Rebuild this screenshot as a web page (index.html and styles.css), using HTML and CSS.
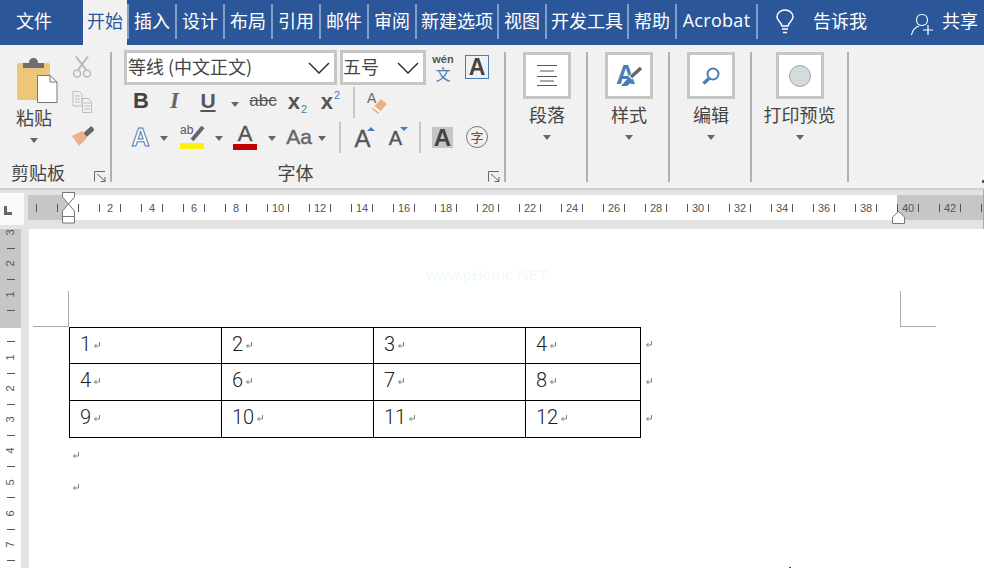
FILE: index.html
```html
<!DOCTYPE html>
<html>
<head>
    <title>Word</title>
    <link rel="stylesheet" href="styles.css">
</head>
<body>
    <svg class="defs" width="0" height="0">
        <symbol id="ret" viewBox="0 0 8 7"><path d="M6.5 0V4H1.5M3.5 2L1.5 4L3.5 6" fill="none" stroke="#808080"/></symbol>
        <symbol id="launch" viewBox="0 0 12 11"><path d="M.5 10.5V.5H11M3 3L11 10M11 6V10.5H6.5" fill="none" stroke="#666"/></symbol>
        <symbol id="chev" viewBox="0 0 22 12"><path d="M1 1L11 11L21 1" fill="none" stroke="#333" stroke-width="1.5"/></symbol>
    </svg>

    <div class="tabs">
        <div class="tab tab-file">文件</div>
        <div class="tab tab-home">开始</div>
        <div class="tab tab-first">插入</div>
        <div class="tab">设计</div>
        <div class="tab">布局</div>
        <div class="tab">引用</div>
        <div class="tab">邮件</div>
        <div class="tab">审阅</div>
        <div class="tab tab-wide">新建选项</div>
        <div class="tab">视图</div>
        <div class="tab tab-wide">开发工具</div>
        <div class="tab">帮助</div>
        <div class="tab tab-acro">Acrobat</div>
        <svg class="bulb" width="18" height="25" viewBox="0 0 18 25"><path d="M6 17C5 13 1 11.500 1 8C1 4 4.500 1 9 1S17 4 17 8C17 11.500 13 13 12 17ZM6 20H12M7 23.500H11" fill="none" stroke="#fff" stroke-width="1.500"/></svg>
        <div class="tell">告诉我</div>
        <svg class="person" width="22" height="23" viewBox="0 0 22 23"><path d="M11 1.500C7.500 1.500 5.500 4 5.500 7C5.500 10 7.500 12.500 11 12.500S16.500 10 16.500 7C16.500 4 14.500 1.500 11 1.500ZM.5 22C1.500 17 4.500 14 8 13M17 12V22M12 17H22" fill="none" stroke="#fff" stroke-width="1.200"/></svg>
        <div class="share">共享</div>
    </div>

    <div class="ribbon">
        <div class="group group-clip">
            <div class="clip-top">
                <div class="paste">
                    <svg class="paste-icon" width="41" height="45" viewBox="0 0 41 45">
                        <rect x="0" y="5" width="33" height="37" rx="2" fill="#eec67a"/>
                        <path d="M6 10V5H12C12 1.500 14 0 16.500 0S21 1.500 21 5H27V10Z" fill="#6e6e6e"/>
                        <path d="M20.500 17.500H33L40 24V44.500H20.500Z" fill="#fff" stroke="#777"/>
                        <path d="M33 17.500V24H40" fill="none" stroke="#777"/>
                    </svg>
                    <div class="big-label">粘贴</div>
                    <span class="caret"></span>
                </div>
                <div class="clip-tools">
                    <svg width="20" height="22" viewBox="0 0 20 22"><path d="M4 .5L14.500 14.500M16 .5L5.500 14.500" fill="none" stroke="#b9b9b9" stroke-width="2"/><circle cx="5" cy="17.500" r="3.500" fill="none" stroke="#b9b9b9" stroke-width="1.500"/><circle cx="15" cy="17.500" r="3.500" fill="none" stroke="#b9b9b9" stroke-width="1.500"/></svg>
                    <svg width="20" height="23" viewBox="0 0 20 23"><path d="M1 1.500H7L10 4.500V16H1ZM3 6H8M3 9H8M3 12H8" fill="none" stroke="#bdbdbd"/><path d="M10.500 8.500H16L19.500 11.500V22.500H10.500ZM12 13H18M12 16H18M12 19H18" fill="#f1f1f1" stroke="#bdbdbd"/></svg>
                    <svg width="23" height="21" viewBox="0 0 23 21"><path d="M22 3L14 10" stroke="#666" stroke-width="5"/><path d="M1 11L11 6L16 13L8 21Z" fill="#eeb088"/></svg>
                </div>
            </div>
            <div class="foot foot-clip">
                <span>剪贴板</span>
                <svg class="launch" width="12" height="11"><use href="#launch"/></svg>
            </div>
        </div>

        <div class="group group-font">
            <div class="font-rows">
                <div class="combo-row">
                    <div class="combo combo-name"><span>等线 (中文正文)</span><svg width="22" height="12"><use href="#chev"/></svg></div>
                    <div class="combo combo-size"><span>五号</span><svg width="22" height="12"><use href="#chev"/></svg></div>
                    <div class="wen"><span class="wen-top">wén</span><span class="wen-cn">文</span></div>
                    <div class="boxed-a">A</div>
                </div>
                <div class="tool-row tool-row-a">
                    <span class="t w34 t-b">B</span>
                    <span class="t w33 t-i">I</span>
                    <span class="t w34 t-u">U</span>
                    <span class="t w20"><span class="caret"></span></span>
                    <span class="t w36 t-abc">abc</span>
                    <span class="t w33 t-x">x<sub>2</sub></span>
                    <span class="t w33 t-x">x<sup>2</sup></span>
                    <span class="vsep vsep-a"></span>
                    <span class="t w36">
                        <svg class="open" width="22" height="24" viewBox="0 0 22 24">
                            <text x="0" y="12" font-family="Liberation Sans" font-size="14" fill="#666">A</text>
                            <path d="M14 8L20 13L11 23L5 18Z" fill="#eeb088"/>
                            <path d="M5 18L11 23" stroke="#fff" stroke-width="2" transform="translate(2 -2)"/>
                        </svg>
                    </span>
                </div>
                <div class="tool-row tool-row-b">
                    <span class="t w33 t-outline">A</span>
                    <span class="t w14"><span class="caret"></span></span>
                    <span class="t w42">
                        <svg class="open" width="24" height="24" viewBox="0 0 24 24">
                            <text x="0" y="9" font-family="Liberation Sans" font-size="12" fill="#555">ab</text>
                            <path d="M23 2L12 15" stroke="#666" stroke-width="4"/>
                            <rect x="0" y="18" width="24" height="6" fill="#f9f20f"/>
                        </svg>
                    </span>
                    <span class="t w12"><span class="caret"></span></span>
                    <span class="t w40 t-color">A</span>
                    <span class="t w14"><span class="caret"></span></span>
                    <span class="t w36 t-aa">Aa</span>
                    <span class="t w14"><span class="caret"></span></span>
                    <span class="vsep vsep-b"></span>
                    <span class="t w35 t-grow">A<i class="tri tri-up"></i></span>
                    <span class="t w33 t-shrink">A<i class="tri tri-down"></i></span>
                    <span class="vsep vsep-c"></span>
                    <span class="t w35"><span class="t-shade">A</span></span>
                    <span class="t w34"><span class="t-circle">字</span></span>
                </div>
            </div>
            <div class="foot foot-font">
                <span></span>
                <span>字体</span>
                <svg class="launch" width="12" height="11"><use href="#launch"/></svg>
            </div>
        </div>

        <div class="group group-big">
            <div class="big-box">
                <svg width="20" height="21" viewBox="0 0 20 21"><path d="M0 .5H20M3 6H17M0 11.500H20M3 16H17M0 20.500H20" stroke="#555"/></svg>
            </div>
            <div class="big-label">段落</div>
            <span class="caret"></span>
        </div>
        <div class="group group-big">
            <div class="big-box">
                <svg class="open" width="25" height="23" viewBox="0 0 25 23">
                    <text x="-1" y="20" font-family="Liberation Sans" font-weight="bold" font-size="27" fill="#4a7db5">A</text>
                    <path d="M24 4L13 14" stroke="#fff" stroke-width="5"/>
                    <path d="M24 4L14 13" stroke="#666" stroke-width="3.500"/>
                    <path d="M12 13L16 17L10 22H4Z" fill="#4a7db5"/>
                </svg>
            </div>
            <div class="big-label">样式</div>
            <span class="caret"></span>
        </div>
        <div class="group group-big">
            <div class="big-box">
                <svg width="18" height="18" viewBox="0 0 18 18"><circle cx="11" cy="7" r="5.500" fill="none" stroke="#4a7db5" stroke-width="2"/><path d="M7 11.500L1.500 16.500" stroke="#4a7db5" stroke-width="3.500"/></svg>
            </div>
            <div class="big-label">编辑</div>
            <span class="caret"></span>
        </div>
        <div class="group group-big group-print">
            <div class="big-box">
                <svg width="22" height="22" viewBox="0 0 22 22"><circle cx="11" cy="11" r="10.500" fill="#d3dcdc" stroke="#a0a0a8"/></svg>
            </div>
            <div class="big-label">打印预览</div>
            <span class="caret"></span>
        </div>
        <span class="collapse"></span>
    </div>

    <div class="ruler-row">
        <div class="corner"><span class="corner-l"></span></div>
        <div class="ruler">
            <div class="ruler-in">
                <span class="rn"></span><span class="rn"></span><span class="rn">2</span><span class="rn">4</span><span class="rn">6</span><span class="rn">8</span><span class="rn">10</span><span class="rn">12</span><span class="rn">14</span><span class="rn">16</span><span class="rn">18</span><span class="rn">20</span><span class="rn">22</span><span class="rn">24</span><span class="rn">26</span><span class="rn">28</span><span class="rn">30</span><span class="rn">32</span><span class="rn">34</span><span class="rn">36</span><span class="rn">38</span><span class="rn">40</span><span class="rn">42</span><span class="rn"></span>
            </div>
        </div>
        <svg class="marker-left" width="13" height="37" viewBox="0 0 13 37">
            <path d="M.5 .5H12.500V5L6.500 12L.5 5Z" fill="#fff" stroke="#777"/>
            <path d="M6.500 12L12.500 19V31H.5V19Z" fill="#fff" stroke="#777"/>
            <path d="M.5 24.500H12.500" stroke="#777"/>
        </svg>
        <svg class="marker-right" width="13" height="13" viewBox="0 0 13 13"><path d="M6.500 .5L12.500 6V12.500H.5V6Z" fill="#fff" stroke="#777"/></svg>
    </div>

    <div class="main">
        <div class="vruler">
            <div class="vruler-in">
                <span class="vn">3</span><span class="vt"></span><span class="vn">2</span><span class="vt"></span><span class="vn">1</span><span class="vt"></span><span class="vn"></span><span class="vt"></span><span class="vn">1</span><span class="vt"></span><span class="vn">2</span><span class="vt"></span><span class="vn">3</span><span class="vt"></span><span class="vn">4</span><span class="vt"></span><span class="vn">5</span><span class="vt"></span><span class="vn">6</span><span class="vt"></span><span class="vn">7</span><span class="vt"></span>
            </div>
        </div>
        <div class="page">
            <div class="watermark">www.pHome.NET</div>
            <div class="marks">
                <div class="mark mark-l"></div>
                <div class="mark mark-r"></div>
            </div>
            <div class="table-wrap">
                <table class="doc-table">
                    <tr class="r1">
                        <td class="c-a"><span class="cell">1<svg class="ret"><use href="#ret"/></svg></span></td>
                        <td class="c-a"><span class="cell">2<svg class="ret"><use href="#ret"/></svg></span></td>
                        <td class="c-a"><span class="cell">3<svg class="ret"><use href="#ret"/></svg></span></td>
                        <td class="c-b"><span class="cell">4<svg class="ret"><use href="#ret"/></svg></span></td>
                    </tr>
                    <tr class="r2">
                        <td><span class="cell">4<svg class="ret"><use href="#ret"/></svg></span></td>
                        <td><span class="cell">6<svg class="ret"><use href="#ret"/></svg></span></td>
                        <td><span class="cell">7<svg class="ret"><use href="#ret"/></svg></span></td>
                        <td><span class="cell">8<svg class="ret"><use href="#ret"/></svg></span></td>
                    </tr>
                    <tr class="r2">
                        <td><span class="cell">9<svg class="ret"><use href="#ret"/></svg></span></td>
                        <td><span class="cell">10<svg class="ret"><use href="#ret"/></svg></span></td>
                        <td><span class="cell">11<svg class="ret"><use href="#ret"/></svg></span></td>
                        <td><span class="cell">12<svg class="ret"><use href="#ret"/></svg></span></td>
                    </tr>
                </table>
                <div class="row-marks">
                    <span class="rm rm-1"><svg class="ret"><use href="#ret"/></svg></span>
                    <span class="rm"><svg class="ret"><use href="#ret"/></svg></span>
                    <span class="rm"><svg class="ret"><use href="#ret"/></svg></span>
                </div>
            </div>
            <div class="para"><svg class="ret"><use href="#ret"/></svg></div>
            <div class="para"><svg class="ret"><use href="#ret"/></svg></div>
            <span class="speck"></span>
        </div>
    </div>
</body>
</html>
```
FILE: styles.css
```css
body {
    margin: 0;
    width: 984px;
    height: 568px;
    overflow: hidden;
    background: #fff;
    font-family: "Noto Sans CJK SC", "Liberation Sans", sans-serif;
    color: #444;
}

.defs {
    display: block;
    height: 0;
}

.open {
    overflow: visible;
}

/* title tabs */
.tabs {
    display: flex;
    height: 45px;
    background: #2b579a;
    color: #fff;
    font-size: 18px;
}

.tab {
    width: 48px;
    height: 35px;
    margin-top: 4px;
    line-height: 33px;
    text-align: center;
    box-sizing: border-box;
    border-right: 2px solid #7ea0c9;
}

.tab-file {
    width: 83px;
    padding-right: 15px;
    border: none;
}

.tab-home {
    width: 44px;
    height: 45px;
    margin-top: 0;
    line-height: 41px;
    border: none;
    background: #f1f1f1;
    color: #2b579a;
}

.tab-first {
    width: 50px;
    border-left: 2px solid #7ea0c9;
}

.tab-wide {
    width: 82px;
}

.tab-acro {
    width: 81px;
    font-family: "Open Sans", sans-serif;
    letter-spacing: 0.3px;
}

.bulb {
    margin: 9px 0 0 18px;
}

.tell {
    margin: 4px 0 0 19px;
    line-height: 33px;
}

.person {
    margin: 13px 0 0 44px;
}

.share {
    margin: 4px 0 0 9px;
    line-height: 33px;
}

/* ribbon */
.ribbon {
    position: relative;
    display: flex;
    height: 143px;
    background: #f1f1f1;
    border-bottom: 2px solid #cfcfcf;
    font-size: 18px;
}

.collapse {
    position: absolute;
    right: 0;
    top: 135px;
    width: 2px;
    height: 3px;
    background: #555;
}

.group {
    display: flex;
    flex-direction: column;
    height: 130px;
    margin-top: 7px;
    border-right: 2px solid #b1b1b1;
}

.group-clip {
    width: 110px;
}

.group-font {
    width: 392px;
}

.group-big {
    width: 78px;
    padding-left: 2px;
    align-items: center;
}

.group-print {
    width: 95px;
    padding-left: 0;
}

.clip-top {
    display: flex;
}

.paste {
    display: flex;
    flex-direction: column;
    align-items: center;
    width: 68px;
    padding-top: 6px;
}

.paste-icon {
    margin-left: 7px;
}

.paste .big-label {
    margin-top: 1px;
}

.clip-tools {
    display: flex;
    flex-direction: column;
    align-items: center;
    gap: 12px;
    width: 28px;
    padding-top: 4px;
}

.big-box {
    display: flex;
    align-items: center;
    justify-content: center;
    width: 48px;
    height: 47px;
    box-sizing: border-box;
    border: 3px solid #c6c6c6;
    background: #fff;
}

.big-label {
    margin-top: 2px;
    line-height: 26px;
}

.caret {
    display: block;
    width: 0;
    height: 0;
    margin-top: 8px;
    border-left: 4px solid transparent;
    border-right: 4px solid transparent;
    border-top: 5px solid #666;
}

.t .caret {
    margin-top: 3px;
}

.foot {
    margin-top: auto;
    line-height: 20px;
}

.foot-clip {
    display: flex;
    align-items: center;
    padding: 0 4px 0 11px;
}

.foot-clip .launch {
    margin-left: auto;
    margin-top: 8px;
}

.foot-font {
    display: grid;
    grid-template-columns: 1fr auto 1fr;
    align-items: center;
    padding-right: 25px;
}

.foot-font .launch {
    justify-self: end;
    margin-top: 8px;
    margin-right: -21px;
}

.font-rows {
    margin: -2px 0 0 12px;
}

.combo-row {
    display: flex;
    height: 35px;
}

.combo {
    display: flex;
    align-items: center;
    justify-content: space-between;
    box-sizing: border-box;
    height: 35px;
    padding: 0 4px 3px 1px;
    border: 3px solid #c6c6c6;
    background: #fff;
}

.combo svg {
    margin-top: 3px;
}

.combo-name {
    width: 213px;
    margin-right: 3px;
}

.combo-size {
    width: 86px;
    margin-right: 7px;
    padding-left: 0;
}

.wen {
    display: flex;
    flex-direction: column;
    align-items: center;
    width: 20px;
    margin-right: 12px;
}

.wen-top {
    margin-top: 4px;
    font: bold 11px/11px "Liberation Sans", sans-serif;
    color: #555;
}

.wen-cn {
    margin-top: 1px;
    font-size: 15px;
    line-height: 15px;
    color: #4a7db5;
}

.boxed-a {
    width: 24px;
    height: 24px;
    margin-top: 5px;
    box-sizing: border-box;
    border: 1px solid #4a7db5;
    font: bold 23px/22px "Liberation Sans", sans-serif;
    text-align: center;
    color: #444;
}

.tool-row {
    display: flex;
    align-items: center;
}

.tool-row-a {
    height: 31px;
    margin-top: 2px;
}

.tool-row-b {
    height: 30px;
    margin-top: 4px;
}

.t {
    display: flex;
    align-items: center;
    justify-content: center;
    height: 28px;
    font-family: "Liberation Sans", sans-serif;
    color: #555;
}

.w12 { width: 12px; }
.w14 { width: 14px; }
.w20 { width: 20px; }
.w33 { width: 33px; }
.w34 { width: 34px; }
.w35 { width: 35px; }
.w36 { width: 36px; }
.w40 { width: 40px; }
.w42 { width: 42px; }

.t-b {
    margin-top: -3px;
    font-size: 22px;
    font-weight: bold;
    color: #444;
}

.t-i {
    margin-top: -3px;
    font: italic bold 23px "Liberation Serif", serif;
    color: #666;
}

.t-u {
    margin-top: -3px;
    font-size: 21px;
    font-weight: bold;
    text-decoration: underline;
    text-decoration-thickness: 1.5px;
    text-underline-offset: 2px;
}

.t-abc {
    margin-top: -3px;
    font-size: 17px;
    text-decoration: line-through;
}

.t-x {
    display: block;
    margin-top: -3px;
    font-size: 22px;
    line-height: 30px;
    font-weight: bold;
    text-align: center;
}

.t-x sub,
.t-x sup {
    font-size: 11px;
    font-weight: normal;
    color: #4a7db5;
    line-height: 0;
    margin-left: 1px;
}

.t-x sub {
    vertical-align: -4px;
}

.t-x sup {
    vertical-align: 10px;
}

.vsep {
    width: 2px;
    background: #c6c6c6;
}

.vsep-a {
    height: 31px;
    margin-left: 6px;
    margin-right: 5px;
}

.vsep-b {
    height: 31px;
    margin: 0 6px 0 10px;
}

.vsep-c {
    height: 31px;
    margin: 0 4px;
}

.t-outline {
    font-size: 25px;
    font-weight: bold;
    color: #fff;
    -webkit-text-stroke: 1px #4a7db5;
}

.t-color {
    flex-direction: column;
    justify-content: flex-start;
    height: 28px;
    font-size: 22px;
    line-height: 21px;
    color: #555;
    -webkit-text-stroke: 0.4px #555;
}

.t-color::after {
    content: "";
    display: block;
    width: 24px;
    height: 6px;
    background: #c00000;
}

.t-aa {
    padding-left: 4px;
    box-sizing: border-box;
    font-size: 21px;
    color: #666;
    -webkit-text-stroke: 0.4px #666;
}

.t-grow,
.t-shrink {
    align-items: flex-end;
    font-size: 24px;
    line-height: 25px;
    -webkit-text-stroke: 0.4px #555;
}

.t-shrink {
    font-size: 20px;
}

.tri {
    width: 0;
    height: 0;
    margin: 0 0 20px -4px;
    border-left: 4px solid transparent;
    border-right: 4px solid transparent;
    -webkit-text-stroke: 0;
}

.t-shrink .tri {
    margin-left: -2px;
}

.tri-up {
    border-bottom: 4px solid #4a7db5;
}

.tri-down {
    border-top: 4px solid #4a7db5;
}

.t-shade {
    width: 21px;
    height: 21px;
    background: #c6c6c6;
    font-size: 24px;
    line-height: 22px;
    text-align: center;
    font-weight: bold;
    color: #444;
}

.t-circle {
    width: 20px;
    height: 20px;
    border: 1px solid #777;
    border-radius: 50%;
    font: 13px/19px "Noto Sans CJK SC", sans-serif;
    text-align: center;
}

/* horizontal ruler */
.ruler-row {
    position: relative;
    display: flex;
    height: 39px;
    background: #e3e3e3;
    border-right: 1px solid #aaa;
    box-sizing: border-box;
}

.corner {
    display: flex;
    align-items: flex-end;
    width: 24px;
    height: 32px;
    margin-top: 3px;
    background: #f9f9f9;
}

.corner-l {
    width: 8px;
    height: 9px;
    margin: 0 0 10px 4px;
    box-sizing: border-box;
    border-left: 3px solid #666;
    border-bottom: 3px solid #666;
}

.ruler {
    flex: 1;
    height: 25px;
    margin: 5px 0 0 4px;
    overflow: hidden;
    background: linear-gradient(to right, #c6c6c6 40px, #fff 40px, #fff 869px, #c6c6c6 869px);
}

.ruler-in {
    display: flex;
    align-items: center;
    height: 25px;
    margin-left: -13px;
}

.rn {
    flex: none;
    width: 22px;
    height: 8px;
    margin-right: 20px;
    box-sizing: border-box;
    border-left: 1px solid #555;
    border-right: 1px solid #555;
    font: 11px/8px "Liberation Sans", sans-serif;
    text-align: center;
    color: #555;
}

.marker-left {
    position: absolute;
    left: 62px;
    top: 2px;
}

.marker-right {
    position: absolute;
    left: 892px;
    top: 21px;
}

/* document */
.main {
    display: flex;
    height: 339px;
    background: #e3e3e3;
}

.vruler {
    width: 21px;
    height: 339px;
    overflow: hidden;
    background: linear-gradient(to bottom, #c6c6c6 99px, #fff 99px);
}

.vruler-in {
    display: flex;
    flex-direction: column;
    align-items: center;
    margin-top: -4px;
}

.vn,
.vt {
    flex: none;
    display: flex;
    align-items: center;
    justify-content: center;
    height: 15.6px;
    font: 11px/15.6px "Liberation Sans", sans-serif;
    color: #555;
}

.vn {
    writing-mode: vertical-rl;
    transform: rotate(180deg);
}

.vt::before {
    content: "";
    display: block;
    width: 8px;
    height: 1px;
    background: #555;
}

.page {
    position: relative;
    flex: 1;
    margin-left: 8px;
    padding-top: 62px;
    background: #fff;
}

.speck {
    position: absolute;
    left: 760px;
    bottom: 0;
    width: 2px;
    height: 1px;
    background: #444;
}

.watermark {
    position: absolute;
    left: 397px;
    top: 37px;
    font: 15.5px "Liberation Sans", sans-serif;
    color: #effaf8;
}

.marks {
    display: flex;
    justify-content: space-between;
    padding: 0 48px 0 4px;
}

.mark {
    width: 36px;
    height: 36px;
    box-sizing: border-box;
    border-bottom: 1px solid #aaa;
}

.mark-l {
    border-right: 1px solid #aaa;
}

.mark-r {
    border-left: 1px solid #aaa;
}

.table-wrap {
    display: flex;
    margin-left: 40px;
}

.doc-table {
    width: 572px;
    table-layout: fixed;
    border-collapse: collapse;
    color: #222;
}

.doc-table td {
    padding: 0 0 0 10px;
    border: 1px solid #000;
    font: 300 20px/24px "Roboto", sans-serif;
}

.c-a {
    width: 152px;
    box-sizing: border-box;
}

.r1 {
    height: 36px;
}

.r2 {
    height: 37px;
}

.cell {
    display: flex;
    align-items: center;
    margin-top: -4px;
}

.cell .ret {
    margin-left: 2px;
}

.ret {
    width: 8px;
    height: 7px;
    margin: 3px 0 0 4px;
}

.row-marks {
    display: flex;
    flex-direction: column;
}

.rm {
    display: flex;
    align-items: center;
    height: 37px;
    margin-top: -2px;
    margin-bottom: 2px;
}

.rm-1 {
    height: 36px;
}

.para {
    display: flex;
    align-items: center;
    height: 32px;
    margin-left: 39px;
}
```
